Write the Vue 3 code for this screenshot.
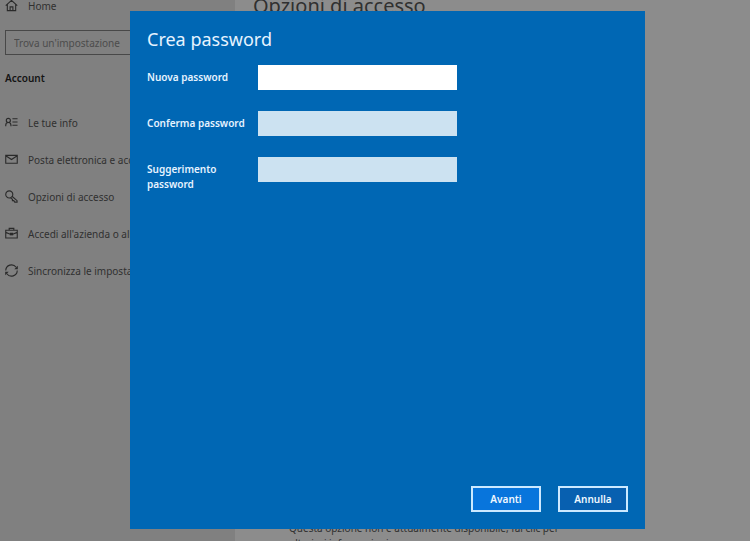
<template>
  <div class="page">
    <aside class="sidebar">
      <a href="#" class="nav-item">
        <svg viewBox="0 0 14 14" class="icon">
          <path d="M0.8 7.2 L7 1.5 L13.2 7.2 M2.5 6 V12.5 H11.5 V6 M5.5 12.5 V8.5 H8.5 V12.5" />
        </svg>
        <span>Home</span>
      </a>

      <input class="search" type="text" placeholder="Trova un'impostazione" aria-label="Trova un'impostazione" />

      <h2 class="section">Account</h2>

      <nav>
        <a v-for="item in items" :key="item.label" href="#" class="nav-item">
          <svg viewBox="0 0 14 14" class="icon">
            <path :d="item.icon" />
            <path v-if="item.fill" class="solid" :d="item.fill" />
          </svg>
          <span>{{ item.label }}</span>
        </a>
      </nav>
    </aside>

    <main class="content">
      <h1>Opzioni di accesso</h1>
      <p>
        Questa opzione non è attualmente disponibile, fai clic per<br />
        ulteriori informazioni
      </p>
    </main>

    <!-- finestra di dialogo -->
    <div class="overlay">
      <form class="dialog" role="dialog" aria-labelledby="dialog-title" @submit.prevent>
        <h2 id="dialog-title">Crea password</h2>

        <div v-for="field in fields" :key="field.id" class="field">
          <label :for="field.id">{{ field.label }}</label>
          <input :id="field.id" v-model="form[field.id]" :type="field.type" :class="{ active: field.id === current }" @focus="current = field.id" />
        </div>

        <div class="actions">
          <button type="submit" class="primary">Avanti</button>
          <button type="button">Annulla</button>
        </div>
      </form>
    </div>
  </div>
</template>

<script setup>
import { reactive, ref } from 'vue'

const items = [
  {
    label: 'Le tue info',
    icon: 'M0.8 11 V10 Q0.8 7 3.6 7 Q6.4 7 6.4 10 V11 M1.4 4.8 A2.2 2.2 0 1 1 5.8 4.8 A2.2 2.2 0 1 1 1.4 4.8 M8 3 H13.5 M8 6.5 H13.5 M8 10 H13.5',
  },
  {
    label: 'Posta elettronica e account',
    icon: 'M0.8 2.5 H13.2 V11 H0.8 Z M0.8 3 L7 7 L13.2 3',
  },
  {
    label: 'Opzioni di accesso',
    icon: 'M0.8 4.8 A3.8 3.8 0 1 1 8.4 4.8 A3.8 3.8 0 1 1 0.8 4.8 M7.8 7 L13 11.5 V13 H10.5 L9.5 11.5 H8 V10 L6 8.5',
  },
  {
    label: "Accedi all'azienda o all'istituto di istruzione",
    icon: 'M0.8 3.5 H13.2 V11.8 H0.8 Z M4.5 3.5 V1.5 H9.5 V3.5 M0.8 5.8 L5 7.6 H9 L13.2 5.8',
    fill: 'M5.2 6.2 H8.8 V9 H5.2 Z',
  },
  {
    label: 'Sincronizza le impostazioni',
    icon: 'M0.8 7 A6.2 6.2 0 0 1 12 3.5 M13.2 7 A6.2 6.2 0 0 1 2 10.5',
    fill: 'M13.8 1.8 V5.6 H10 Z M0.2 12.2 V8.4 H4 Z',
  },
]

const fields = [
  { id: 'password', label: 'Nuova password', type: 'password' },
  { id: 'confirm', label: 'Conferma password', type: 'password' },
  { id: 'hint', label: 'Suggerimento password', type: 'text' },
]

const current = ref('password')
const form = reactive({ password: '', confirm: '', hint: '' })
</script>

<style>
body {
  margin: 0;
  background: #8c8c8c;
}
</style>

<style scoped>
.page {
  position: relative;
  display: flex;
  height: 100vh;
  overflow: hidden;
  background: #8c8c8c;
  color: #303030;
  font-family: "Noto Sans", "Open Sans", sans-serif;
  font-size: 10px;
}

h1,
h2,
p {
  margin: 0;
}

/* barra laterale */
.sidebar {
  box-sizing: border-box;
  flex: 0 0 235px;
  min-width: 0;
  margin-top: -13px;
  padding: 0 5px;
  background: #808080;
}
.nav-item {
  display: flex;
  align-items: center;
  gap: 10px;
  height: 37px;
  color: #303030;
  text-decoration: none;
  white-space: nowrap;
}
.icon {
  flex: none;
  width: 13px;
  height: 13px;
  fill: none;
  stroke: #2a2a2a;
  stroke-width: 1.2;
}
.icon .solid {
  fill: #2a2a2a;
  stroke: none;
}
.search {
  display: block;
  box-sizing: border-box;
  width: 100%;
  height: 25px;
  margin-top: 6px;
  padding: 0 8px;
  border: 1px solid #484848;
  border-radius: 0;
  background: transparent;
  font: inherit;
}
.search::placeholder {
  color: #4c4c4c;
  opacity: 1;
}
.section {
  margin: 15px 0 18px;
  color: #141414;
  font-size: 10px;
  font-weight: 600;
  line-height: 16px;
}

/* contenuto */
.content {
  display: flex;
  flex: 1;
  flex-direction: column;
  justify-content: space-between;
  min-width: 0;
  margin: -8px 0 -10px;
  padding-left: 18px;
}
.content h1 {
  font-size: 20px;
  font-weight: 400;
  line-height: 28px;
}
.content p {
  padding-left: 36px;
  line-height: 15px;
}

/* dialogo */
.overlay {
  position: absolute;
  inset: 0;
  display: flex;
  padding: 11px 105px 12px 130px;
}
.dialog {
  display: flex;
  flex: 1;
  flex-direction: column;
  padding: 14px 17px 17px;
  background: #0067b4;
  color: #e6f3ff;
}
.dialog h2 {
  margin-bottom: 12px;
  font-size: 18px;
  font-weight: 400;
  line-height: 28px;
}
.field {
  display: flex;
  align-items: flex-start;
  height: 46px;
}
.field label {
  box-sizing: border-box;
  width: 111px;
  padding: 5px 8px 0 0;
  font-weight: 600;
  line-height: 15px;
}
.field input {
  box-sizing: border-box;
  width: 199px;
  height: 25px;
  padding: 0 6px;
  border: 0;
  border-radius: 0;
  outline: none;
  background: #cce2f1;
  font: inherit;
}
.field input.active {
  background: #fff;
}
.actions {
  display: flex;
  justify-content: flex-end;
  gap: 17px;
  margin-top: auto;
}
.actions button {
  box-sizing: border-box;
  width: 70px;
  height: 26px;
  padding: 0;
  border: 2px solid #cce9ff;
  border-radius: 0;
  background: #0860b0;
  color: #f0f8ff;
  font: inherit;
  font-weight: 600;
}
.actions .primary {
  background: #0875dc;
}
</style>
